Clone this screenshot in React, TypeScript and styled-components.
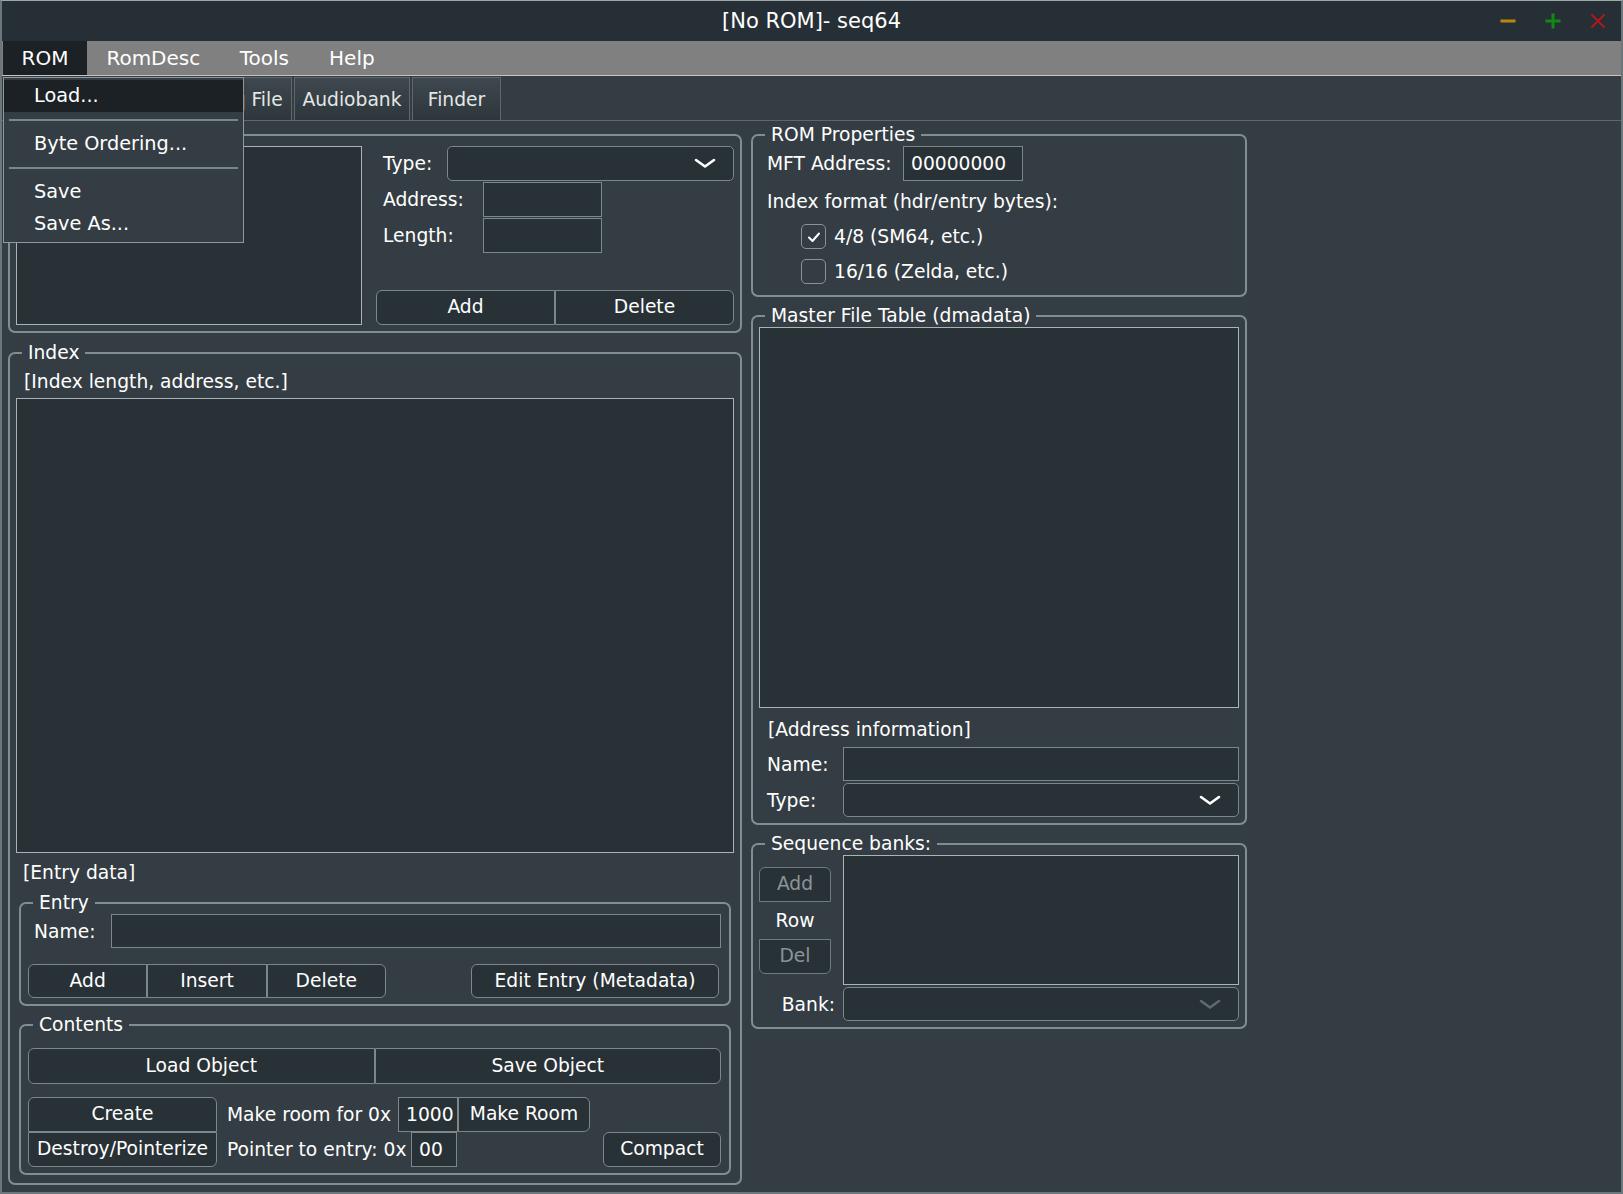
import React from "react";
import styled, { createGlobalStyle } from "styled-components";

const FONT = `"DejaVu Sans", Verdana, "Noto Sans", sans-serif`;

const GlobalStyle = createGlobalStyle`
  html, body { margin: 0; padding: 0; background: #343d43; overflow: hidden; }
  body { font-family: ${FONT}; }
  *, *::before, *::after { box-sizing: border-box; }
`;

const Window = styled.div`
  position: relative;
  width: 1623px;
  height: 1194px;
  display: flex;
  flex-direction: column;
  background: #343d43;
  border: 2px solid #6c777b;
  border-top: 1px solid #9ea6a9;
  font-family: ${FONT};
  font-size: 18.7px;
  color: #ffffff;
`;

const TitleBar = styled.div`
  flex: none;
  height: 40px;
  display: grid;
  grid-template-columns: 1fr auto 1fr;
  align-items: center;
  background: #262f35;
`;

const TitleText = styled.div`
  grid-column: 2;
  font-size: 21px;
  color: #ffffff;
`;

const Controls = styled.div`
  grid-column: 3;
  justify-self: end;
  display: flex;
  gap: 15px;
  padding-right: 8px;
`;

const CtrlBtn = styled.div`
  width: 30px;
  height: 30px;
  display: flex;
  align-items: center;
  justify-content: center;
`;

const MenuBar = styled.div`
  flex: none;
  height: 35px;
  display: flex;
  padding-left: 1px;
  background: #808080;
  border-bottom: 1px solid #c4c4c4;
`;

const MenuItem = styled.div<{ $open?: boolean; $px: number }>`
  height: 34px;
  line-height: 34px;
  padding: 0 ${(p) => p.$px}px;
  font-size: 20px;
  color: #ffffff;
  background: ${(p) => (p.$open ? "#1b2125" : "transparent")};
`;

const TabBar = styled.div`
  flex: none;
  height: 45px;
  display: flex;
  align-items: flex-end;
  gap: 2px;
  padding: 1px 0 0 1px;
  border-bottom: 1px solid #5d676c;
  background: #343d43;
`;

const Tab = styled.div<{ $w: number; $active?: boolean }>`
  width: ${(p) => p.$w}px;
  height: 43px;
  display: flex;
  align-items: center;
  justify-content: center;
  border: 1px solid #5d676c;
  border-bottom: none;
  background: ${(p) =>
    p.$active
      ? "linear-gradient(#4a555b, #3b454b)"
      : "linear-gradient(#3e484e, #2d363b)"};
  color: #e4e6e7;
  white-space: nowrap;
`;

const Content = styled.div`
  flex: 1;
  display: flex;
  gap: 9px;
  padding: 3px 6px 7px 6px;
  min-height: 0;
`;

const LeftCol = styled.div`
  width: 734px;
  flex: none;
  display: flex;
  flex-direction: column;
  gap: 9px;
`;

const RightCol = styled.div`
  width: 496px;
  flex: none;
  display: flex;
  flex-direction: column;
  gap: 8px;
  align-self: flex-start;
`;

const Group = styled.fieldset<{ $grow?: boolean; $mx?: number; $mt?: number }>`
  margin: ${(p) => p.$mt ?? 0}px ${(p) => p.$mx ?? 0}px 0;
  padding: 0;
  min-width: 0;
  border: 2px solid #828d91;
  border-radius: 7px;
  display: flex;
  flex-direction: column;
  flex: ${(p) => (p.$grow ? "1" : "none")};
`;

const Legend = styled.legend`
  margin-left: 12px;
  padding: 0 6px;
  height: 22px;
  line-height: 22px;
  font-size: 18.7px;
  color: #ffffff;
`;

const GroupBody = styled.div<{ $pad: string }>`
  flex: 1;
  display: flex;
  flex-direction: column;
  padding: ${(p) => p.$pad};
  min-height: 0;
`;

const Row = styled.div<{ $h?: number; $mt?: number; $gap?: number; $justify?: string }>`
  display: flex;
  align-items: center;
  height: ${(p) => (p.$h ? `${p.$h}px` : "auto")};
  margin-top: ${(p) => p.$mt ?? 0}px;
  gap: ${(p) => p.$gap ?? 0}px;
  justify-content: ${(p) => p.$justify ?? "flex-start"};
`;

const TopRow = styled.div`
  display: flex;
  align-items: flex-start;
  gap: 14px;
`;

const TextRow = styled.div<{ $h: number; $mt?: number; $pl?: number }>`
  flex: none;
  height: ${(p) => p.$h}px;
  margin-top: ${(p) => p.$mt ?? 0}px;
  padding-left: ${(p) => p.$pl ?? 0}px;
  display: flex;
  align-items: center;
  white-space: nowrap;
`;

const Label = styled.div<{ $w?: number; $pl?: number; $pr?: number; $align?: string }>`
  flex: none;
  width: ${(p) => (p.$w ? `${p.$w}px` : "auto")};
  padding-left: ${(p) => p.$pl ?? 0}px;
  padding-right: ${(p) => p.$pr ?? 0}px;
  text-align: ${(p) => p.$align ?? "left"};
  white-space: nowrap;
`;

const Field = styled.div<{ $w?: number; $h: number }>`
  flex: ${(p) => (p.$w ? "none" : "1")};
  width: ${(p) => (p.$w ? `${p.$w}px` : "auto")};
  height: ${(p) => p.$h}px;
  display: flex;
  align-items: center;
  padding-left: 7px;
  background: #283136;
  border: 1px solid #7c878b;
  color: #ffffff;
  white-space: nowrap;
`;

const ListBox = styled.div<{ $w?: number; $h?: number }>`
  flex: ${(p) => (p.$h ? "none" : "1")};
  width: ${(p) => (p.$w ? `${p.$w}px` : "auto")};
  height: ${(p) => (p.$h ? `${p.$h}px` : "auto")};
  background: #283136;
  border: 1px solid #aab3b6;
`;

const Combo = styled.div<{ $h: number }>`
  flex: 1;
  height: ${(p) => p.$h}px;
  display: flex;
  align-items: center;
  justify-content: flex-end;
  padding-right: 17px;
  background: #283136;
  border: 1px solid #7c878b;
  border-radius: 5px;
`;

const FormCol = styled.div`
  flex: 1;
  height: 179px;
  display: flex;
  flex-direction: column;
  gap: 1px;
`;

const radii: Record<string, string> = {
  all: "6px",
  left: "6px 0 0 6px",
  right: "0 6px 6px 0",
  top: "6px 6px 0 0",
  bottom: "0 0 6px 6px",
  none: "0",
};

const Button = styled.button<{
  $w?: number;
  $h: number;
  $shape?: string;
  $dim?: boolean;
  $push?: boolean;
  $mr?: number;
}>`
  flex: ${(p) => (p.$w ? "none" : "1")};
  width: ${(p) => (p.$w ? `${p.$w}px` : "auto")};
  height: ${(p) => p.$h}px;
  margin-left: ${(p) => (p.$push ? "auto" : "0")};
  margin-right: ${(p) => p.$mr ?? 0}px;
  padding: 0;
  font-family: ${FONT};
  font-size: 18.7px;
  line-height: 1;
  color: ${(p) => (p.$dim ? "#8a9498" : "#ffffff")};
  background: #283136;
  border: 1px solid ${(p) => (p.$dim ? "#6f7a7e" : "#7c878b")};
  border-radius: ${(p) => radii[p.$shape ?? "all"]};
  white-space: nowrap;
`;

const BtnGroup = styled.div<{ $w?: number; $h: number; $mb?: number; $auto?: boolean }>`
  display: flex;
  flex: none;
  width: ${(p) => (p.$w ? `${p.$w}px` : "auto")};
  height: ${(p) => p.$h}px;
  margin-top: ${(p) => (p.$auto ? "auto" : "0")};
  margin-bottom: ${(p) => p.$mb ?? 0}px;
`;

const VStack = styled.div<{ $w: number }>`
  flex: none;
  width: ${(p) => p.$w}px;
  display: flex;
  flex-direction: column;
  & > button {
    flex: none;
  }
`;

const FlexCol = styled.div<{ $ml?: number }>`
  flex: 1;
  display: flex;
  flex-direction: column;
  margin-left: ${(p) => p.$ml ?? 0}px;
`;

const CheckRow = styled.div`
  height: 35px;
  display: flex;
  align-items: center;
  gap: 8px;
  padding-left: 34px;
`;

const CheckBox = styled.div`
  width: 25px;
  height: 25px;
  flex: none;
  display: flex;
  align-items: center;
  justify-content: center;
  border: 1px solid #8a9498;
  border-radius: 5px;
`;

const SeqGrid = styled.div`
  display: grid;
  grid-template-columns: 84px 1fr;
  row-gap: 2px;
  align-items: center;
`;

const SideStack = styled.div`
  height: 130px;
  width: 72px;
  display: flex;
  flex-direction: column;
  justify-content: center;
  & > button {
    flex: none;
  }
`;

const RowCaption = styled.div`
  height: 37px;
  display: flex;
  align-items: center;
  justify-content: center;
`;

const Popup = styled.div`
  position: absolute;
  left: 1px;
  top: 76px;
  width: 241px;
  padding: 2px 0;
  background: #343d43;
  border: 1px solid #8e989b;
  display: flex;
  flex-direction: column;
  z-index: 5;
`;

const PopItem = styled.div<{ $hl?: boolean }>`
  height: 32px;
  line-height: 32px;
  padding-left: 30px;
  font-size: 19.3px;
  color: #ffffff;
  background: ${(p) => (p.$hl ? "#1b2125" : "transparent")};
  white-space: nowrap;
`;

const PopSep = styled.div`
  height: 16px;
  display: flex;
  align-items: center;
  padding: 0 5px;
  &::after {
    content: "";
    flex: 1;
    height: 2px;
    background: #7b868a;
  }
`;

const Chevron: React.FC<{ dim?: boolean }> = ({ dim }) => (
  <svg width="22" height="11" viewBox="0 0 22 11">
    <path
      d="M2 2 L11 8.5 L20 2"
      fill="none"
      stroke={dim ? "#5f6a6e" : "#ffffff"}
      strokeWidth="2.6"
      strokeLinecap="round"
      strokeLinejoin="round"
    />
  </svg>
);

const Check = () => (
  <svg width="14" height="12" viewBox="0 0 14 12">
    <polyline
      points="2,6.5 5.5,10 12,2.5"
      fill="none"
      stroke="#ffffff"
      strokeWidth="2"
      strokeLinecap="round"
      strokeLinejoin="round"
    />
  </svg>
);

export default function App() {
  return (
    <>
      <GlobalStyle />
      <Window>
        <TitleBar>
          <TitleText>[No ROM]- seq64</TitleText>
          <Controls>
            <CtrlBtn>
              <svg width="16" height="4" viewBox="0 0 16 4">
                <rect x="0.5" y="0.5" width="15" height="3" fill="#b8860b" />
              </svg>
            </CtrlBtn>
            <CtrlBtn>
              <svg width="16" height="16" viewBox="0 0 16 16">
                <rect x="6.5" y="0.5" width="3" height="15" fill="#118a11" />
                <rect x="0.5" y="6.5" width="15" height="3" fill="#118a11" />
              </svg>
            </CtrlBtn>
            <CtrlBtn>
              <svg width="16" height="16" viewBox="0 0 16 16">
                <path d="M1.5 1.5 L14.5 14.5 M14.5 1.5 L1.5 14.5" stroke="#b0181e" strokeWidth="2" />
              </svg>
            </CtrlBtn>
          </Controls>
        </TitleBar>

        <MenuBar>
          <MenuItem $open $px={18.5}>ROM</MenuItem>
          <MenuItem $px={19.5}>RomDesc</MenuItem>
          <MenuItem $px={20}>Tools</MenuItem>
          <MenuItem $px={20}>Help</MenuItem>
        </MenuBar>

        <TabBar>
          <Tab $w={145} $active>ROM</Tab>
          <Tab $w={142}>Audioseq File</Tab>
          <Tab $w={116}>Audiobank</Tab>
          <Tab $w={89}>Finder</Tab>
        </TabBar>

        <Content>
          <LeftCol>
            <Group>
              <Legend>Files</Legend>
              <GroupBody $pad="0 6px 6px 6px">
                <TopRow>
                  <ListBox $w={346} $h={179} />
                  <FormCol>
                    <Row $h={35}>
                      <Label $w={71} $pl={7}>Type:</Label>
                      <Combo $h={35}>
                        <Chevron />
                      </Combo>
                    </Row>
                    <Row $h={35}>
                      <Label $w={107} $pl={7}>Address:</Label>
                      <Field $w={119} $h={35} />
                    </Row>
                    <Row $h={35}>
                      <Label $w={107} $pl={7}>Length:</Label>
                      <Field $w={119} $h={35} />
                    </Row>
                    <BtnGroup $h={35} $auto>
                      <Button $h={35} $shape="left">Add</Button>
                      <Button $h={35} $shape="right">Delete</Button>
                    </BtnGroup>
                  </FormCol>
                </TopRow>
              </GroupBody>
            </Group>

            <Group $grow>
              <Legend>Index</Legend>
              <GroupBody $pad="0 6px 8px 6px">
                <TextRow $h={34} $pl={8}>[Index length, address, etc.]</TextRow>
                <ListBox />
                <TextRow $h={39} $pl={7}>[Entry data]</TextRow>

                <Group $mx={3}>
                  <Legend>Entry</Legend>
                  <GroupBody $pad="0 8px 6px 7px">
                    <Row $h={34}>
                      <Label $w={83} $pl={6}>Name:</Label>
                      <Field $h={34} />
                    </Row>
                    <Row $h={34} $mt={16} $justify="space-between">
                      <BtnGroup $w={358} $h={34}>
                        <Button $h={34} $shape="left">Add</Button>
                        <Button $h={34} $shape="none">Insert</Button>
                        <Button $h={34} $shape="right">Delete</Button>
                      </BtnGroup>
                      <Button $w={248} $h={34} $mr={2}>Edit Entry (Metadata)</Button>
                    </Row>
                  </GroupBody>
                </Group>

                <Group $mx={3} $mt={8}>
                  <Legend>Contents</Legend>
                  <GroupBody $pad="12px 8px 6px 7px">
                    <BtnGroup $h={36}>
                      <Button $h={36} $shape="left">Load Object</Button>
                      <Button $h={36} $shape="right">Save Object</Button>
                    </BtnGroup>
                    <Row $mt={13}>
                      <VStack $w={189}>
                        <Button $h={35} $shape="top">Create</Button>
                        <Button $h={35} $shape="bottom">Destroy/Pointerize</Button>
                      </VStack>
                      <FlexCol $ml={10}>
                        <Row $h={35}>
                          <Label $w={171}>Make room for 0x</Label>
                          <Field $w={60} $h={35}>1000</Field>
                          <Button $w={132} $h={35} $shape="right">Make Room</Button>
                        </Row>
                        <Row $h={35}>
                          <Label $w={184}>Pointer to entry: 0x</Label>
                          <Field $w={46} $h={35}>00</Field>
                          <Button $w={118} $h={35} $push>Compact</Button>
                        </Row>
                      </FlexCol>
                    </Row>
                  </GroupBody>
                </Group>
              </GroupBody>
            </Group>
          </LeftCol>

          <RightCol>
            <Group>
              <Legend>ROM Properties</Legend>
              <GroupBody $pad="0 8px 6px 14px">
                <Row $h={35}>
                  <Label $w={136}>MFT Address:</Label>
                  <Field $w={120} $h={35}>00000000</Field>
                </Row>
                <TextRow $h={35} $mt={3}>Index format (hdr/entry bytes):</TextRow>
                <CheckRow>
                  <CheckBox>
                    <Check />
                  </CheckBox>
                  <span>4/8 (SM64, etc.)</span>
                </CheckRow>
                <CheckRow>
                  <CheckBox />
                  <span>16/16 (Zelda, etc.)</span>
                </CheckRow>
              </GroupBody>
            </Group>

            <Group>
              <Legend>Master File Table (dmadata)</Legend>
              <GroupBody $pad="0 6px 6px 6px">
                <ListBox $h={381} />
                <TextRow $h={34} $mt={4} $pl={9}>[Address information]</TextRow>
                <Row $h={34} $mt={1}>
                  <Label $w={84} $pl={8}>Name:</Label>
                  <Field $h={34} />
                </Row>
                <Row $h={34} $mt={2}>
                  <Label $w={84} $pl={8}>Type:</Label>
                  <Combo $h={34}>
                    <Chevron />
                  </Combo>
                </Row>
              </GroupBody>
            </Group>

            <Group>
              <Legend>Sequence banks:</Legend>
              <GroupBody $pad="0 6px 6px 6px">
                <SeqGrid>
                  <SideStack>
                    <Button $h={35} $shape="top" $dim>Add</Button>
                    <RowCaption>Row</RowCaption>
                    <Button $h={35} $shape="bottom" $dim>Del</Button>
                  </SideStack>
                  <ListBox $h={130} />
                  <Label $align="right" $pr={8}>Bank:</Label>
                  <Combo $h={34}>
                    <Chevron dim />
                  </Combo>
                </SeqGrid>
              </GroupBody>
            </Group>
          </RightCol>
        </Content>

        <Popup>
          <PopItem $hl>Load...</PopItem>
          <PopSep />
          <PopItem>Byte Ordering...</PopItem>
          <PopSep />
          <PopItem>Save</PopItem>
          <PopItem>Save As...</PopItem>
        </Popup>
      </Window>
    </>
  );
}
